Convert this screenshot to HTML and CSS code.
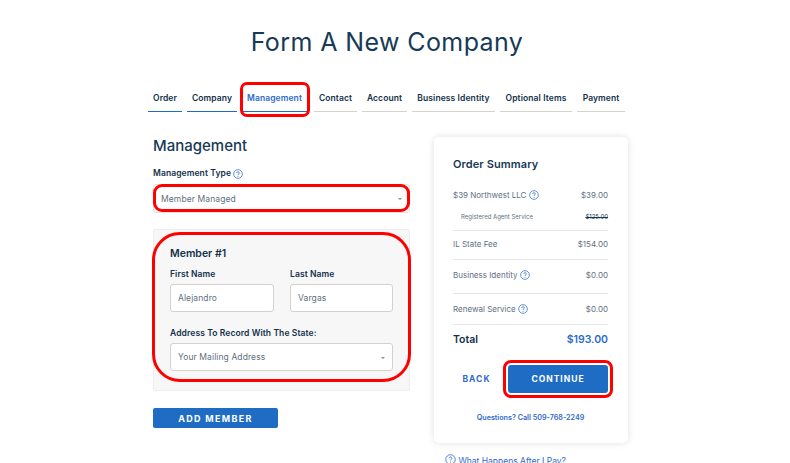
FILE: index.html
```html
<!DOCTYPE html>
<html lang="en">
<head>
    <meta charset="UTF-8">
    <meta name="viewport" content="width=device-width, initial-scale=1.0">
    <title>Form A New Company</title>
    <link rel="stylesheet" href="styles.css">
</head>
<body>

    <h1 class="page-title">Form A New Company</h1>

    <nav class="steps">
        <a class="step done">Order</a>
        <a class="step done">Company</a>
        <a class="step current marked">Management</a>
        <a class="step">Contact</a>
        <a class="step">Account</a>
        <a class="step">Business Identity</a>
        <a class="step">Optional Items</a>
        <a class="step">Payment</a>
    </nav>

    <div class="columns">
        <main class="form-col">
            <h2>Management</h2>
            <div class="label-row">
                <label>Management Type</label>
                <svg class="help" viewBox="0 0 12 12"><use href="#help-icon"></use></svg>
            </div>
            <div class="select type-select marked">Member Managed<span class="caret"></span></div>

            <section class="member marked-large">
                <h3>Member #1</h3>
                <div class="name-row">
                    <div class="field">
                        <label>First Name</label>
                        <div class="input">Alejandro</div>
                    </div>
                    <div class="field">
                        <label>Last Name</label>
                        <div class="input">Vargas</div>
                    </div>
                </div>
                <div class="field">
                    <label>Address To Record With The State:</label>
                    <div class="select">Your Mailing Address<span class="caret"></span></div>
                </div>
            </section>

            <button class="add-btn">ADD MEMBER</button>
        </main>

        <aside class="summary-col">
            <div class="card">
                <h3>Order Summary</h3>
                <div class="line first">
                    <span>$39 Northwest LLC <svg class="help" viewBox="0 0 12 12"><use href="#help-icon"></use></svg></span>
                    <span>$39.00</span>
                </div>
                <div class="line sub">
                    <span>Registered Agent Service</span>
                    <s>$125.00</s>
                </div>
                <div class="line state">
                    <span>IL State Fee</span>
                    <span>$154.00</span>
                </div>
                <div class="line tall">
                    <span>Business Identity <svg class="help" viewBox="0 0 12 12"><use href="#help-icon"></use></svg></span>
                    <span>$0.00</span>
                </div>
                <div class="line">
                    <span>Renewal Service <svg class="help" viewBox="0 0 12 12"><use href="#help-icon"></use></svg></span>
                    <span>$0.00</span>
                </div>
                <div class="total">
                    <span>Total</span>
                    <span class="total-price">$193.00</span>
                </div>
                <div class="actions">
                    <button class="back-btn">BACK</button>
                    <button class="continue-btn marked">CONTINUE</button>
                </div>
                <p class="questions">Questions? Call 509-768-2249</p>
            </div>
            <a class="after-pay"><svg class="help big" viewBox="0 0 12 12"><use href="#help-icon"></use></svg> What Happens After I Pay?</a>
        </aside>
    </div>

    <svg width="0" height="0" class="defs">
        <symbol id="help-icon" viewBox="0 0 12 12">
            <circle cx="6" cy="6" r="5.2" fill="none" stroke="currentColor" stroke-width="0.9"></circle>
            <path d="M4.4 4.7C4.4 3.8 5.1 3.2 6 3.2s1.6.6 1.6 1.4c0 1.2-1.6 1.3-1.6 2.6" fill="none" stroke="currentColor" stroke-width="0.9"></path>
            <circle cx="6" cy="8.8" r="0.6" fill="currentColor"></circle>
        </symbol>
    </svg>

</body>
</html>
```

FILE: styles.css
```css
body {
    font-family: Inter, 'Open Sans', sans-serif;
    background-color: #fff;
    color: #12304a;
    margin: 0;
    height: 463px;
    overflow: hidden;
}

.page-title {
    font-size: 25px;
    font-weight: 400;
    line-height: 30px;
    text-align: center;
    margin: 0;
    padding: 27px 16px 0 0;
    letter-spacing: 0.4px;
    color: #173a56;
}

.steps {
    display: flex;
    gap: 5px;
    margin: 31px 0 0 148px;
    width: 478px;
}

.step {
    position: relative;
    flex: 1 1 auto;
    height: 23px;
    line-height: 20px;
    font-size: 8.5px;
    font-weight: 600;
    letter-spacing: 0.1px;
    text-align: center;
    border-bottom: 1px solid #d8d2c8;
    white-space: nowrap;
}

.step:nth-child(1) { flex: 0 0 34px; }
.step:nth-child(2) { flex: 0 0 50px; }
.step:nth-child(3) { flex: 0 0 65px; margin-right: 2px; }
.step:nth-child(4) { flex: 0 0 43px; }
.step:nth-child(5) { flex: 0 0 45px; }
.step:nth-child(6) { flex: 0 0 83px; }
.step:nth-child(7) { flex: 0 0 72px; }
.step:nth-child(8) { flex: 0 0 48px; }

.step.done {
    border-bottom-color: #1f6cc4;
}

.step.current {
    color: #2f6bc9;
    border-bottom-color: #1f6cc4;
}

.marked {
    position: relative;
}

.marked::after,
.marked-large::after {
    content: "";
    position: absolute;
    border: 3px solid #f00;
    pointer-events: none;
}

.step.marked::after {
    inset: -6px -3px -6px -2px;
    border-radius: 7px;
}

.columns {
    display: flex;
    margin: 25px 0 0 153px;
    gap: 24px;
    align-items: flex-start;
}

.form-col {
    width: 257px;
}

.form-col h2 {
    font-size: 15px;
    font-weight: 500;
    line-height: 18px;
    margin: 0;
    color: #173a56;
}

label {
    display: block;
    font-size: 8.5px;
    font-weight: 600;
    letter-spacing: 0.1px;
    line-height: 11px;
}

.label-row {
    display: flex;
    align-items: center;
    gap: 2px;
    margin-top: 13px;
    height: 11px;
}

.help {
    width: 10px;
    height: 10px;
    color: #2f6bc9;
    vertical-align: -1.5px;
}

.select,
.input {
    height: 28px;
    line-height: 26px;
    box-sizing: border-box;
    background: #fff;
    border: 1px solid #d6d1ca;
    border-radius: 3px;
    padding-left: 7px;
    font-size: 8.5px;
    letter-spacing: 0.1px;
    color: #5f7080;
    position: relative;
}

.type-select {
    margin-top: 5px;
    height: 29px;
    line-height: 28px;
    border-color: #e4e1dc;
}

.type-select.marked::after {
    inset: -1px -1px 0 -1px;
    border-radius: 9px;
}

.caret {
    position: absolute;
    right: 7px;
    top: 13px;
    width: 0;
    height: 0;
    border-left: 2px solid transparent;
    border-right: 2px solid transparent;
    border-top: 2px solid #8a8f94;
}

.member {
    position: relative;
    margin-top: 16px;
    height: 162px;
    box-sizing: border-box;
    background: #f7f7f7;
    border: 1px solid #eeeeee;
    border-radius: 2px;
    padding: 17px 16px 0;
}

.marked-large::after {
    inset: 2px -2px 8px -2px;
    border-radius: 28px;
}

.member h3 {
    font-size: 10.5px;
    font-weight: 600;
    line-height: 14px;
    margin: 0;
}

.name-row {
    display: grid;
    grid-template-columns: 104px 103px;
    gap: 16px;
    margin: 8px 0 16px;
}

.field label {
    margin-bottom: 4px;
}

.add-btn {
    display: block;
    width: 125px;
    height: 20px;
    margin-top: 17px;
    background: #1f6cc4;
    color: #fff;
    border: none;
    border-radius: 2px;
    font-family: inherit;
    font-size: 9px;
    font-weight: 700;
    letter-spacing: 1.3px;
}

.summary-col {
    width: 194px;
}

.card {
    height: 306px;
    box-sizing: border-box;
    padding: 20px 20px 0 19px;
    border-radius: 5px;
    box-shadow: 0 0 7px rgba(0, 0, 0, 0.13);
    background: #fff;
}

.card h3 {
    font-size: 11px;
    font-weight: 600;
    letter-spacing: 0.1px;
    line-height: 14px;
    margin: 0 0 14px;
    color: #173a56;
}

.line {
    display: flex;
    justify-content: space-between;
    font-size: 8px;
    line-height: 12px;
    color: #5f7080;
    padding: 9px 0;
    border-bottom: 1px solid #e6e6e6;
}

.line.first {
    border-bottom: none;
    padding: 4px 0 0;
}

.line.sub {
    font-size: 6px;
    padding: 11px 0 9px 8px;
    line-height: 9px;
}

.line.sub s {
    color: #173a56;
}

.line.state {
    padding: 7px 0 9px;
}

.line.tall {
    padding-bottom: 12px;
}

.total {
    display: flex;
    justify-content: space-between;
    font-size: 10.5px;
    font-weight: 600;
    line-height: 14px;
    padding-top: 8px;
}

.total-price {
    color: #2f6bc9;
}

.actions {
    display: flex;
    justify-content: space-between;
    align-items: center;
    margin-top: 18px;
}

.back-btn {
    width: 47px;
    background: none;
    border: none;
    padding: 0;
    color: #2f6bc9;
    font-family: inherit;
    font-size: 8.5px;
    font-weight: 700;
    letter-spacing: 1px;
}

.continue-btn {
    width: 100px;
    height: 28px;
    background: #1f6cc4;
    color: #fff;
    border: none;
    border-radius: 3px;
    font-family: inherit;
    font-size: 8.5px;
    font-weight: 700;
    letter-spacing: 1px;
}

.continue-btn.marked::after {
    inset: -5px -5px -5px -5px;
    border-radius: 8px;
}

.questions {
    font-size: 7.2px;
    font-weight: 600;
    line-height: 10px;
    color: #2f6bc9;
    text-align: center;
    margin: 20px 0 0;
}

.after-pay {
    display: block;
    margin: 11px 0 0 11px;
    font-size: 8.5px;
    line-height: 12px;
    color: #2f6bc9;
}

.help.big {
    width: 11px;
    height: 11px;
}

.defs {
    position: absolute;
}
```
